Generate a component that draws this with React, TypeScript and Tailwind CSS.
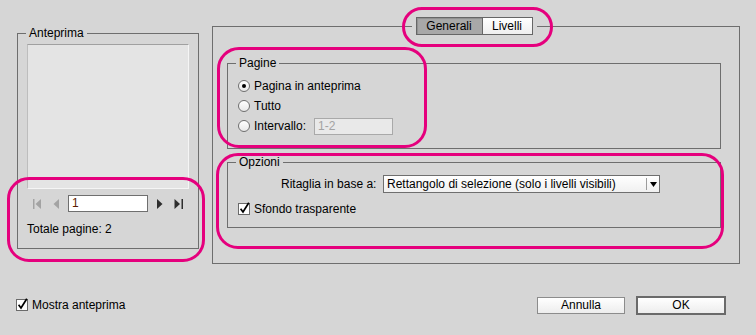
import React from 'react';

const Radio = ({ checked }: { checked?: boolean }) => (
	<span className="flex h-[12px] w-[12px] shrink-0 items-center justify-center rounded-full border border-[#6f6f6f] bg-linear-to-b from-white to-[#e9e9e9]">
		{checked && <span className="h-[4px] w-[4px] rounded-full bg-black" />}
	</span>
);

const CheckBox = () => (
	<svg width="14" height="14" viewBox="0 0 14 14" className="block shrink-0">
		<rect x="0.5" y="1.5" width="11" height="11" fill="#fff" stroke="#6a6a6a" />
		<path d="M2.6 6.8 L5 10 L10.8 0.8" fill="none" stroke="#000" strokeWidth="1.7" />
	</svg>
);

const PagerIcon = ({ kind }: { kind: 'first' | 'prev' | 'next' | 'last' }) => {
	const gray = '#a3a3a3';
	const dark = '#2e2e2e';
	if (kind === 'first')
		return (
			<svg width="9" height="10" viewBox="0 0 9 10" className="block">
				<rect x="0" y="0" width="1.5" height="10" fill={gray} />
				<path d="M8 0 L2.5 5 L8 10 Z" fill={gray} />
			</svg>
		);
	if (kind === 'prev')
		return (
			<svg width="6" height="10" viewBox="0 0 6 10" className="block">
				<path d="M6 0 L0.5 5 L6 10 Z" fill={gray} />
			</svg>
		);
	if (kind === 'next')
		return (
			<svg width="6" height="10" viewBox="0 0 6 10" className="block">
				<path d="M0 0 L5.5 5 L0 10 Z" fill={dark} />
			</svg>
		);
	return (
		<svg width="9" height="10" viewBox="0 0 9 10" className="block">
			<path d="M0.5 0 L6 5 L0.5 10 Z" fill={dark} />
			<rect x="7.5" y="0" width="1.5" height="10" fill={dark} />
		</svg>
	);
};

const Highlight = ({ className }: { className: string }) => (
	<div className={`pointer-events-none absolute border-[3px] border-[#e5007d] ${className}`} />
);

export default function App() {
	return (
		<div className="relative h-[335px] w-[756px] overflow-hidden bg-[#d6d6d6] font-['Liberation_Sans',Arial,sans-serif] text-[12px] leading-[15px] text-black">
			<div className="flex items-start pl-[17px] pt-[17px]">
				{/* Anteprima */}
				<fieldset className="mt-[9px] h-[223px] w-[182px] border border-[#6e6e6e] pl-[8px] pr-[9px]">
					<legend className="px-[3px] leading-[14px]">Anteprima</legend>
					<div className="ml-[1px] mt-[4px] h-[145px] w-[162px] border border-t-[#a0a0a0] border-l-[#bdbdbd] border-r-[#f5f5f5] border-b-[#f5f5f5] bg-[#e4e4e4]" />
					<div className="ml-[1px] mt-[6px] flex h-[17px] items-center">
						<span className="ml-[6px]"><PagerIcon kind="first" /></span>
						<span className="ml-[11px]"><PagerIcon kind="prev" /></span>
						<div className="ml-[9px] flex h-[17px] w-[80px] items-center border border-[#6f6f6f] bg-white pl-[3px] text-[#5c1d00]">
							1
						</div>
						<span className="ml-[9px]"><PagerIcon kind="next" /></span>
						<span className="ml-[11px]"><PagerIcon kind="last" /></span>
					</div>
					<div className="ml-[1px] mt-[10px]">Totale pagine: 2</div>
				</fieldset>

				{/* Generali */}
				<fieldset className="ml-[13px] h-[247px] w-[528px] border border-[#6e6e6e] pl-[14px] pr-[18px]">
					<legend className="mx-auto px-[4px]">
						<div className="flex h-[18px]">
							<div className="flex w-[67px] items-center justify-center border border-[#666] bg-[#a8a8a8] shadow-[inset_1px_1px_1px_rgba(0,0,0,0.15)]">
								Generali
							</div>
							<div className="flex w-[50px] items-center justify-center border border-l-0 border-[#666] bg-linear-to-b from-white to-[#efefef]">
								Livelli
							</div>
						</div>
					</legend>

					<fieldset className="mt-[21px] h-[93px] border border-[#6e6e6e] pl-[8px]">
						<legend className="px-[3px] leading-[14px]">Pagine</legend>
						<div className="mt-[6px] flex h-[20px] items-center pl-[2px]">
							<Radio checked />
							<span className="ml-[4px]">Pagina in anteprima</span>
						</div>
						<div className="flex h-[20px] items-center pl-[2px]">
							<Radio />
							<span className="ml-[4px]">Tutto</span>
						</div>
						<div className="flex h-[20px] items-center pl-[2px]">
							<Radio />
							<span className="ml-[4px] w-[60px] whitespace-nowrap">Intervallo:</span>
							<div className="flex h-[17px] w-[79px] items-center border border-[#a9a9a9] bg-[#e9e9e9] pl-[3px] text-[#a3a3a3]">
								1-2
							</div>
						</div>
					</fieldset>

					<fieldset className="mt-[6px] h-[73px] border border-[#6e6e6e] pl-[8px]">
						<legend className="px-[3px] leading-[14px]">Opzioni</legend>
						<div className="mt-[6px] flex h-[18px] items-center">
							<span className="ml-[45px] w-[102px] whitespace-nowrap">Ritaglia in base a:</span>
							<div className="flex h-[18px] w-[277px] items-center border border-[#6f6f6f] bg-linear-to-b from-white to-[#f0f0f0]">
								<span className="flex-1 whitespace-nowrap pl-[3px]">
									Rettangolo di selezione (solo i livelli visibili)
								</span>
								<span className="h-[12px] w-px bg-[#9c9c9c]" />
								<span className="flex w-[12px] justify-center">
									<svg width="7" height="5" viewBox="0 0 7 5" className="block">
										<path d="M0 0 L7 0 L3.5 5 Z" fill="#000" />
									</svg>
								</span>
							</div>
						</div>
						<div className="mt-[6px] flex h-[20px] items-center pl-[2px]">
							<CheckBox />
							<span className="ml-[2px]">Sfondo trasparente</span>
						</div>
					</fieldset>
				</fieldset>
			</div>

			{/* footer */}
			<div className="mt-[26px] flex h-[30px] items-center pl-[16px] pr-[30px]">
				<CheckBox />
				<span className="ml-[2px]">Mostra anteprima</span>
				<button className="ml-auto flex h-[17px] w-[88px] items-center justify-center border border-[#8c8c8c] bg-linear-to-b from-white to-[#ededed]">
					Annulla
				</button>
				<button className="ml-[11px] flex h-[19px] w-[90px] items-center justify-center border-2 border-[#6a6a6a] bg-linear-to-b from-white to-[#ededed]">
					OK
				</button>
			</div>

			<Highlight className="left-[402px] top-[7px] h-[40px] w-[151px] rounded-[20px]" />
			<Highlight className="left-[217px] top-[47px] h-[101px] w-[210px] rounded-[22px]" />
			<Highlight className="left-[216px] top-[153px] h-[96px] w-[508px] rounded-[22px]" />
			<Highlight className="left-[7px] top-[177px] h-[85px] w-[198px] rounded-[22px]" />
		</div>
	);
}
